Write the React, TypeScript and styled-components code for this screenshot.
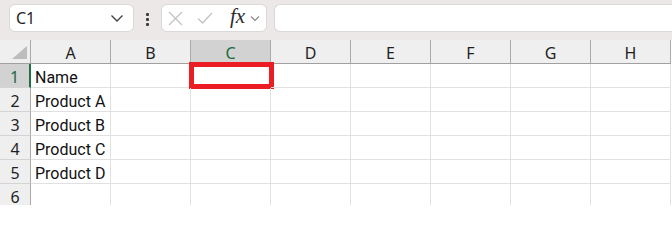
import styled, { createGlobalStyle } from 'styled-components';

const GlobalStyle = createGlobalStyle`
    html, body {
        margin: 0;
        padding: 0;
        background: #ffffff;
        overflow: hidden;
    }
    body {
        font-family: 'Noto Sans', 'Open Sans', sans-serif;
    }
`;

const columns = ['A', 'B', 'C', 'D', 'E', 'F', 'G', 'H'];
const rows: string[][] = [
    ['Name', '', '', '', '', '', '', ''],
    ['Product A', '', '', '', '', '', '', ''],
    ['Product B', '', '', '', '', '', '', ''],
    ['Product C', '', '', '', '', '', '', ''],
    ['Product D', '', '', '', '', '', '', ''],
    ['', '', '', '', '', '', '', ''],
];

const selectedCol = 2;
const selectedRow = 0;

const App = () => {
    return (
        <>
            <GlobalStyle />
            <Page>
                <Toolbar>
                    <NameBox>
                        <NameText>C1</NameText>
                        <Chevron width='14' height='9' viewBox='0 0 14 9'>
                            <path d='M1.5 1.5 L7 7 L12.5 1.5' />
                        </Chevron>
                    </NameBox>
                    <Dots>
                        <span />
                        <span />
                        <span />
                    </Dots>
                    <FxBox>
                        <CancelIcon width='15' height='15' viewBox='0 0 15 15'>
                            <path d='M1 1 L14 14 M14 1 L1 14' />
                        </CancelIcon>
                        <EnterIcon width='16' height='12' viewBox='0 0 16 12'>
                            <path d='M1 6.5 L5.5 11 L15 1' />
                        </EnterIcon>
                        <FxLabel>fx</FxLabel>
                        <SmallChevron width='10' height='7' viewBox='0 0 10 7'>
                            <path d='M1 1.5 L5 5.5 L9 1.5' />
                        </SmallChevron>
                    </FxBox>
                    <FormulaInput />
                </Toolbar>
                <Sheet>
                    <Corner>
                        <CornerTriangle />
                    </Corner>
                    {columns.map((c, i) => (
                        <ColHeader key={c} $selected={i === selectedCol}>
                            {c}
                        </ColHeader>
                    ))}
                    {rows.map((r, ri) => (
                        <>
                            <RowHeader key={`h${ri}`} $selected={ri === selectedRow}>
                                {ri + 1}
                            </RowHeader>
                            {r.map((v, ci) => (
                                <Cell key={`${ri}-${ci}`}>
                                    {v}
                                    {ri === selectedRow && ci === selectedCol && <Highlight />}
                                </Cell>
                            ))}
                        </>
                    ))}
                </Sheet>
            </Page>
        </>
    );
};

const Page = styled.div`
    width: 672px;
    height: 205px;
    overflow: hidden;
`;

const Toolbar = styled.div`
    height: 40px;
    box-sizing: border-box;
    background: #ece8e7;
    display: flex;
    align-items: flex-start;
    padding: 4px 0 0 9px;
`;

const BoxBase = styled.div`
    height: 28px;
    box-sizing: border-box;
    background: #ffffff;
    border: 1px solid #dcd8d7;
    border-radius: 6px;
    display: flex;
    align-items: center;
`;

const NameBox = styled(BoxBase)`
    width: 125px;
    padding: 0 9px 0 6px;
    justify-content: space-between;
`;

const NameText = styled.span`
    font-size: 16px;
    color: #1f1f1f;
`;

const Chevron = styled.svg`
    fill: none;
    stroke: #444;
    stroke-width: 1.4;
`;

const Dots = styled.div`
    width: 27px;
    display: flex;
    flex-direction: column;
    align-items: center;
    gap: 2px;
    padding-top: 9px;

    span {
        width: 3px;
        height: 3px;
        background: #3c3c3c;
        border-radius: 1px;
    }
`;

const FxBox = styled(BoxBase)`
    width: 106px;
    padding: 0 0 0 6px;
`;

const FaintIcon = styled.svg`
    fill: none;
    stroke: #c2c2c2;
    stroke-width: 1.3;
`;

const CancelIcon = styled(FaintIcon)`
    margin-right: 14px;
`;

const EnterIcon = styled(FaintIcon)`
    margin-right: 17px;
`;

const FxLabel = styled.span`
    font-family: 'Liberation Serif', 'DejaVu Serif', serif;
    font-style: italic;
    font-size: 21px;
    color: #2b2b2b;
    margin: -3px 5px 0 0;
`;

const SmallChevron = styled.svg`
    fill: none;
    stroke: #8a8a8a;
    stroke-width: 1.2;
`;

const FormulaInput = styled(BoxBase)`
    flex: 1;
    margin-left: 7px;
    border-right: none;
    border-radius: 6px 0 0 6px;
`;

const Sheet = styled.div`
    display: grid;
    grid-template-columns: 31px repeat(8, 80px);
    grid-template-rows: 24px;
    grid-auto-rows: 24px;
`;

const Corner = styled.div`
    background: #efefef;
    border-right: 1px solid #a9a9a9;
    border-bottom: 1px solid #a0a0a0;
    position: relative;
`;

const CornerTriangle = styled.div`
    position: absolute;
    right: 3px;
    bottom: 4px;
    width: 0;
    height: 0;
    border-left: 15px solid transparent;
    border-bottom: 13px solid #bdbdbd;
`;

const ColHeader = styled.div<{ $selected?: boolean }>`
    background: ${(p) => (p.$selected ? '#d2d2d2' : '#efefef')};
    color: ${(p) => (p.$selected ? '#1b6b3e' : '#1f1f1f')};
    border-right: 1px solid #ababab;
    border-bottom: 1px solid #a0a0a0;
    font-size: 16px;
    padding-top: 2px;
    display: flex;
    align-items: center;
    justify-content: center;
`;

const RowHeader = styled.div<{ $selected?: boolean }>`
    background: ${(p) => (p.$selected ? '#d2d2d2' : '#efefef')};
    color: ${(p) => (p.$selected ? '#1b6b3e' : '#1f1f1f')};
    border-right: ${(p) => (p.$selected ? '2px solid #1e7145' : '1px solid #a9a9a9')};
    border-bottom: 1px solid #d4d4d4;
    font-size: 16px;
    padding-top: 3px;
    display: flex;
    align-items: center;
    justify-content: center;
    box-sizing: border-box;
`;

const Cell = styled.div`
    position: relative;
    box-sizing: border-box;
    border-right: 1px solid #e1e1e1;
    border-bottom: 1px solid #e1e1e1;
    font-family: 'Roboto', 'Liberation Sans', sans-serif;
    font-size: 16px;
    color: #111;
    padding: 3px 0 0 4px;
    display: flex;
    align-items: center;
    white-space: nowrap;
`;

const Highlight = styled.div`
    position: absolute;
    left: -2px;
    top: -2px;
    right: -4px;
    bottom: -2px;
    border: 5px solid #ec1c24;
`;

export default App;
